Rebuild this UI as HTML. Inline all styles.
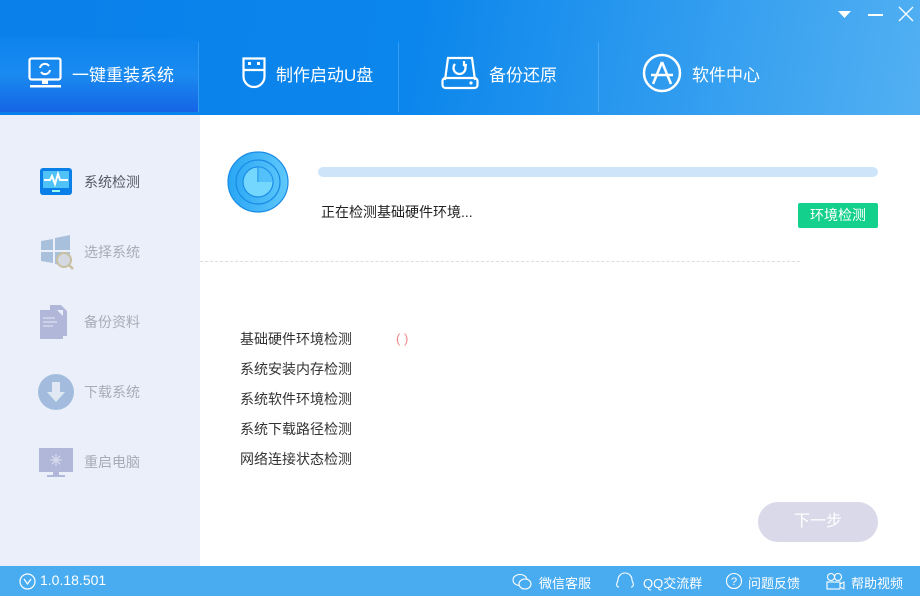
<!DOCTYPE html>
<html><head><meta charset="utf-8"><style>
*{margin:0;padding:0;box-sizing:border-box}
body{width:920px;height:596px;overflow:hidden;position:relative;font-family:"Liberation Sans","Noto Sans CJK SC",sans-serif;background:#fff}
.hdr{position:absolute;left:0;top:0;width:920px;height:115px;background:linear-gradient(100deg,#0a80ea 0%,#0b86ec 45%,#52b0f2 100%)}
.tab{position:absolute;top:37px;height:72px;color:#fff;font-size:17px;display:flex;align-items:center}
.tab svg{margin-right:10px}
.sep{position:absolute;top:42px;width:1px;height:70px;background:rgba(255,255,255,.18)}
.act{position:absolute;left:0;top:38px;width:198px;height:74px;background:linear-gradient(#0c84ec,#1a8af0 50%,#1565e6)}
.side{position:absolute;left:0;top:115px;width:200px;height:451px;background:#ebeffa}
.si{position:absolute;left:38px;display:flex;align-items:center;font-size:14px;color:#a8acb8}
.si .ic{width:36px;height:36px;margin-right:10px}
.ft{position:absolute;left:0;top:566px;width:920px;height:30px;background:#49acf0;color:#fff;font-size:13px}
.ft span{position:absolute;top:7px}
.list div{position:absolute;left:240px;font-size:14px;color:#333}
</style></head><body>
<div class="hdr"></div>
<div class="act"></div>
<svg style="position:absolute;left:838px;top:10px" width="14" height="10"><path d="M0 1h13L6.5 8z" fill="#fff"/></svg>
<div style="position:absolute;left:868px;top:14px;width:15px;height:2px;background:#fff"></div>
<svg style="position:absolute;left:898px;top:6px" width="16" height="16"><path d="M1 1L15 15M15 1L1 15" stroke="#fff" stroke-width="1.3"/></svg>

<div class="tab" style="left:28px"><svg width="34" height="32" viewBox="0 0 34 32"><rect x="1.5" y="1.5" width="31" height="21" rx="2" fill="none" stroke="#fff" stroke-width="2.2"/><rect x="14" y="23" width="6" height="4" fill="#fff"/><rect x="2" y="28" width="31" height="2.5" fill="#fff"/><path d="M12 11a5 5 0 0 1 9-2M22 13a5 5 0 0 1-9 2" fill="none" stroke="#fff" stroke-width="2"/></svg>一键重装系统</div>
<div class="sep" style="left:198px"></div>
<div class="tab" style="left:242px"><svg width="24" height="32" viewBox="0 0 24 32"><path d="M1.5 1.5h21v18a10.5 10.5 0 0 1-21 0z M1.5 13h21" fill="none" stroke="#fff" stroke-width="2.2"/><rect x="6" y="5" width="3" height="3" fill="#fff"/><rect x="15" y="5" width="3" height="3" fill="#fff"/></svg>制作启动U盘</div>
<div class="sep" style="left:398px"></div>
<div class="tab" style="left:441px"><svg width="38" height="34" viewBox="0 0 38 34"><path d="M4 24L7 2h24l3 22" fill="none" stroke="#fff" stroke-width="2.2"/><rect x="1.5" y="22" width="35" height="10" rx="3" fill="none" stroke="#fff" stroke-width="2.2"/><circle cx="30" cy="27" r="1.6" fill="#fff"/><path d="M14 8a6 6 0 1 0 9 0M23 5v4h3" fill="none" stroke="#fff" stroke-width="2.2"/></svg>备份还原</div>
<div class="sep" style="left:598px"></div>
<div class="tab" style="left:642px"><svg width="40" height="40" viewBox="0 0 40 40"><circle cx="20" cy="20" r="18" fill="none" stroke="#fff" stroke-width="2.5"/><path d="M20 9L11 31M20 9l9 22M9 22h22" fill="none" stroke="#fff" stroke-width="2.5"/></svg>软件中心</div>

<div class="side"></div>
<div class="si" style="top:164px;color:#555a66"><svg class="ic" viewBox="0 0 36 36"><rect x="2" y="4" width="32" height="27" rx="3" fill="#0a7fe8"/><rect x="5" y="7" width="26" height="17" fill="#4fc3f7"/><path d="M6 16h6l2-4 3 8 3-10 2 6h8" fill="none" stroke="#fff" stroke-width="2"/><rect x="14" y="26" width="8" height="2" fill="#9fe"/></svg>系统检测</div>
<div class="si" style="top:234px"><svg class="ic" viewBox="0 0 36 36"><path d="M3 7l12-2v11H3zM17 4l15-3v15H17zM3 18h12v11L3 27zM17 18h15v15l-15-3z" fill="#a9c0dc"/><circle cx="26" cy="26" r="7" fill="#d4d8e0" stroke="#c8c0a0" stroke-width="2"/><path d="M31 31l4 4" stroke="#c8c0a0" stroke-width="2.5"/></svg>选择系统</div>
<div class="si" style="top:304px"><svg class="ic" viewBox="0 0 36 36"><path d="M12 1h11l6 6v25h-4V6H12z" fill="#b1b7d8"/><path d="M2 6h17l6 6v23H2z" fill="#b1b7d8"/><path d="M5 14h12M5 18h14M5 22h10" stroke="#d6daee" stroke-width="1.5"/></svg>备份资料</div>
<div class="si" style="top:374px"><svg class="ic" viewBox="0 0 36 36"><circle cx="18" cy="18" r="18" fill="#a3bcdd"/><path d="M14 8h8v10h5l-9 10-9-10h5z" fill="#e0e8f4"/></svg>下载系统</div>
<div class="si" style="top:444px"><svg class="ic" viewBox="0 0 36 36"><rect x="1" y="4" width="34" height="24" fill="#b1b7d8"/><rect x="15" y="28" width="6" height="4" fill="#b1b7d8"/><rect x="9" y="31" width="18" height="2" fill="#b1b7d8"/><path d="M18 10v12M12 16h12M14 12l8 8M22 12l-8 8" stroke="#d6daee" stroke-width="1.3"/></svg>重启电脑</div>

<svg style="position:absolute;left:227px;top:151px" width="62" height="62" viewBox="0 0 62 62"><defs><linearGradient id="g" x1="0" x2="1"><stop offset="0" stop-color="#29a6f4"/><stop offset="1" stop-color="#5fc8fb"/></linearGradient></defs><circle cx="31" cy="31" r="30" fill="url(#g)" stroke="#1a8be6" stroke-width="1.2"/><circle cx="31" cy="31" r="22" fill="none" stroke="#1a8be6" stroke-width="1.2"/><circle cx="31" cy="31" r="15" fill="#74d8fe" stroke="#1a8be6" stroke-width="1.2"/><path d="M31 16v15" stroke="#1a8be6" stroke-width="1.2"/><path d="M31 16a15 15 0 0 1 15 15h-15z" fill="#3fb0f5" opacity=".6"/></svg>
<div style="position:absolute;left:318px;top:167px;width:560px;height:10px;border-radius:5px;background:#cde4f9"></div>
<div style="position:absolute;left:321px;top:202px;font-size:14px;color:#222">正在检测基础硬件环境...</div>
<div style="position:absolute;left:798px;top:203px;width:80px;height:25px;background:#14d08d;color:#fff;font-size:14px;line-height:25px;text-align:center;border-radius:2px">环境检测</div>
<div style="position:absolute;left:200px;top:261px;width:600px;border-top:1px dashed #ddd"></div>

<div class="list">
<div style="top:329px">基础硬件环境检测</div>
<div style="top:359px">系统安装内存检测</div>
<div style="top:389px">系统软件环境检测</div>
<div style="top:419px">系统下载路径检测</div>
<div style="top:449px">网络连接状态检测</div>
</div>
<div style="position:absolute;left:396px;top:331px;font-size:13px;color:#e88">(&nbsp;)</div>

<div style="position:absolute;left:758px;top:502px;width:120px;height:40px;border-radius:20px;background:#d9d9ea;color:#fff;font-size:16px;line-height:40px;text-align:center">下一步</div>

<div class="ft">
<svg style="position:absolute;left:19px;top:7px" width="17" height="17"><circle cx="8.5" cy="8.5" r="7.5" fill="none" stroke="#fff" stroke-width="1.2"/><path d="M5 6l3.5 5L12 6" fill="none" stroke="#fff" stroke-width="1.2"/></svg>
<span style="left:40px;font-size:14px;top:6px">1.0.18.501</span>
<svg style="position:absolute;left:512px;top:7px" width="20" height="17"><ellipse cx="8" cy="7" rx="7" ry="5.5" fill="none" stroke="#fff" stroke-width="1.1"/><ellipse cx="13" cy="11" rx="6" ry="5" fill="#49acf0" stroke="#fff" stroke-width="1.1"/></svg>
<span style="left:539px">微信客服</span>
<svg style="position:absolute;left:615px;top:6px" width="20" height="18"><path d="M4 15c-2 0-3-2-2-4 0-1 1-2 1-3a7 7 0 0 1 14 0c0 1 1 2 1 3 1 2 0 4-2 4" fill="none" stroke="#fff" stroke-width="1.1"/></svg>
<span style="left:643px">QQ交流群</span>
<svg style="position:absolute;left:725px;top:6px" width="18" height="18"><circle cx="9" cy="9" r="7.5" fill="none" stroke="#fff" stroke-width="1.1"/><text x="9" y="13" font-size="11" fill="#fff" text-anchor="middle" font-family="Liberation Sans">?</text></svg>
<span style="left:748px">问题反馈</span>
<svg style="position:absolute;left:824px;top:6px" width="22" height="18"><circle cx="7" cy="5" r="3.5" fill="none" stroke="#fff" stroke-width="1.1"/><circle cx="14" cy="5" r="3.5" fill="none" stroke="#fff" stroke-width="1.1"/><rect x="3" y="10" width="13" height="7" fill="none" stroke="#fff" stroke-width="1.1"/><path d="M16 12l4-2v7l-4-2" fill="none" stroke="#fff" stroke-width="1.1"/></svg>
<span style="left:851px">帮助视频</span>
</div>
</body></html>
